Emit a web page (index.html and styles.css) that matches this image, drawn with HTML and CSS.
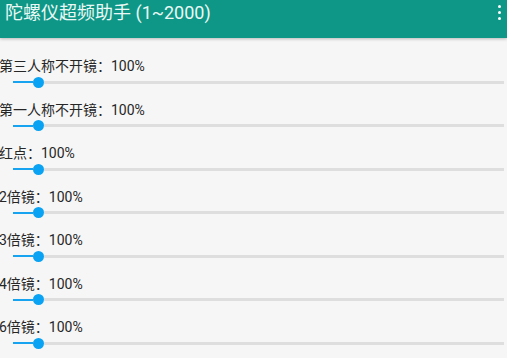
FILE: index.html
```html
<!DOCTYPE html>
<html lang="zh">

<head>
    <meta charset="UTF-8">
    <meta name="viewport" content="width=device-width, initial-scale=1.0">
    <title>陀螺仪超频助手</title>
    <link rel="stylesheet" href="styles.css">
</head>

<body>
    <div class="toolbar">
        <span class="title">陀螺仪超频助手 (1~2000)</span>
        <div class="menu">
            <span class="dot"></span>
            <span class="dot"></span>
            <span class="dot"></span>
        </div>
    </div>

    <div class="list">
        <div class="item">
            <div class="label">第三人称不开镜：100%</div>
            <div class="slider"><div class="fill"></div><div class="thumb"></div><div class="rest"></div></div>
        </div>
        <div class="item">
            <div class="label">第一人称不开镜：100%</div>
            <div class="slider"><div class="fill"></div><div class="thumb"></div><div class="rest"></div></div>
        </div>
        <div class="item">
            <div class="label">红点：100%</div>
            <div class="slider"><div class="fill"></div><div class="thumb"></div><div class="rest"></div></div>
        </div>
        <div class="item">
            <div class="label">2倍镜：100%</div>
            <div class="slider"><div class="fill"></div><div class="thumb"></div><div class="rest"></div></div>
        </div>
        <div class="item">
            <div class="label">3倍镜：100%</div>
            <div class="slider"><div class="fill"></div><div class="thumb"></div><div class="rest"></div></div>
        </div>
        <div class="item">
            <div class="label">4倍镜：100%</div>
            <div class="slider"><div class="fill"></div><div class="thumb"></div><div class="rest"></div></div>
        </div>
        <div class="item">
            <div class="label">6倍镜：100%</div>
            <div class="slider"><div class="fill"></div><div class="thumb"></div><div class="rest"></div></div>
        </div>
    </div>
</body>

</html>
```

FILE: styles.css
```css
/* Page */

body {
    margin: 0;
    background-color: #f6f6f6;
    font-family: Roboto, 'Noto Sans CJK SC', sans-serif;
    overflow: hidden;
}
/* Teal app bar */

.toolbar {
    height: 38px;
    background-color: #0e9787;
    display: flex;
    justify-content: space-between;
    align-items: flex-start;
    padding: 0 5px;
    box-shadow: 0 1px 3px rgba(0, 0, 0, 0.25);
}

.title {
    color: #eaf7f4;
    font-size: 18px;
    line-height: 26px;
}

.menu {
    display: flex;
    flex-direction: column;
    gap: 3px;
    padding-top: 5px;
    padding-right: 1px;
}

.dot {
    width: 3px;
    height: 3px;
    border-radius: 50%;
    background-color: #ffffff;
}
/* Rows */

.list {
    padding-top: 20px;
}

.item {
    height: 43.5px;
}

.label {
    font-size: 14px;
    line-height: 16px;
    color: #262626;
    margin-left: -1px;
}

.slider {
    display: flex;
    align-items: center;
    height: 16px;
    padding-left: 13px;
    padding-right: 3px;
}

.fill {
    width: 20px;
    height: 2px;
    background-color: #17a3f0;
}

.thumb {
    width: 11px;
    height: 11px;
    border-radius: 50%;
    background-color: #0aa2f2;
    flex-shrink: 0;
}

.rest {
    flex: 1;
    height: 3px;
    background-color: #dedede;
}
```
